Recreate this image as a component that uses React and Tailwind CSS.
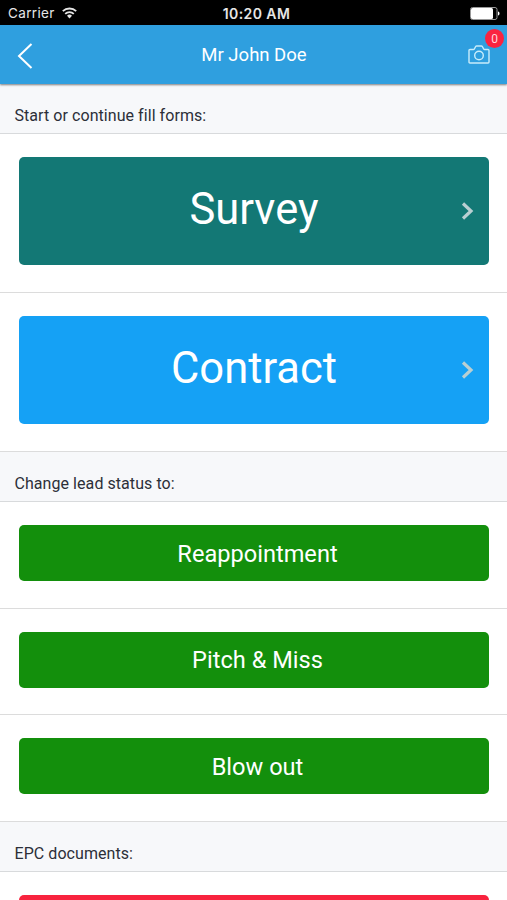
const sections = [
  {
    title: "Start or continue fill forms:",
    items: [
      { label: "Survey", bg: "bg-[#137875]", big: true },
      { label: "Contract", bg: "bg-[#15a1f5]", big: true },
    ],
  },
  {
    title: "Change lead status to:",
    items: [
      { label: "Reappointment", bg: "bg-[#138f0c]" },
      { label: "Pitch & Miss", bg: "bg-[#138f0c]" },
      { label: "Blow out", bg: "bg-[#138f0c]" },
    ],
  },
  {
    title: "EPC documents:",
    items: [{ label: "", bg: "bg-[#f8233e]" }],
  },
];

function StatusBar() {
  return (
    <div className="relative flex h-[25px] items-center justify-between bg-black pt-0.5 pr-[7px] pl-2 font-['Inter',sans-serif] text-[14px] text-[#e6e6e6]">
      <div className="flex items-center gap-[7px]">
        <span className="text-[13.5px] tracking-[0.35px]">Carrier</span>
        <svg className="-mt-0.5" width="15" height="12" viewBox="0 0 15 12" fill="none" stroke="currentColor" strokeWidth="1.8">
          <path d="M.8 4.2a9.6 9.6 0 0 1 13.4 0M3.2 6.9a6.1 6.1 0 0 1 8.6 0" />
          <path d="M5 8.8a3.6 3.6 0 0 1 5 0L7.5 11.6Z" fill="currentColor" stroke="none" />
        </svg>
      </div>
      <span className="absolute inset-x-0 pl-[6px] text-center font-semibold tracking-[0.4px]">10:20 AM</span>
      <svg width="30" height="13" viewBox="0 0 30 13" fill="none">
        <rect x="0.5" y="0.5" width="26.5" height="12" rx="2" stroke="#999" />
        <rect x="1" y="1" width="22" height="11" rx="1.5" fill="white" />
        <path d="M28 4.5c2 .5 2 3.5 0 4Z" fill="white" />
      </svg>
    </div>
  );
}

function Header() {
  return (
    <header className="relative z-10 flex h-[59px] items-center justify-between bg-[#2f9fdf] px-[17px] text-white shadow-[0_1px_2px_rgba(0,0,0,0.5)]">
      <svg className="mt-[3px]" width="16" height="26" viewBox="0 0 16 26" fill="none" stroke="currentColor" strokeWidth="2">
        <path d="M14.5 1 2 13l12.5 12" />
      </svg>
      <h1 className="absolute inset-x-0 pt-0.5 pl-px text-center text-[18.5px]">Mr John Doe</h1>
      <div className="relative">
        <svg width="22" height="19" viewBox="0 0 22 19" fill="none" stroke="#c9edfb" strokeWidth="1.4" strokeLinejoin="round">
          <path d="M2 4.5h3.5C7 4.5 7 1 8.5 1h5C15 1 15 4.5 16.5 4.5H20q1 0 1 1V17q0 1-1 1H2q-1 0-1-1V5.5q0-1 1-1Z" />
          <circle cx="11" cy="10.5" r="4.3" />
        </svg>
        <span className="absolute -top-[16px] -right-[14px] flex size-[19px] items-center justify-center rounded-full bg-[#fa2340] pt-px text-[12px] text-[#ffd5dc]">
          0
        </span>
      </div>
    </header>
  );
}

function ActionButton({ item }) {
  return (
    <button
      className={`relative flex w-full items-center justify-center rounded-[5px] text-white ${item.bg} ${
        item.big ? "h-[108px] pb-[3px] text-[43.5px]" : "h-[56px] pt-[3px] pl-[7px] text-[23.6px]"
      }`}
    >
      {item.label}
      {item.big && (
        <svg className="absolute top-[45px] right-[15px]" width="13" height="18" viewBox="0 0 13 18" fill="none" stroke="#b9cfd2" strokeWidth="3.2">
          <path d="m2 1.5 8 7.5-8 7.5" />
        </svg>
      )}
    </button>
  );
}

export default function App() {
  return (
    <div className="h-[900px] w-full overflow-hidden bg-white font-['Roboto',sans-serif]">
      <StatusBar />
      <Header />
      {sections.map((section) => (
        <section key={section.title}>
          <h2 className="flex h-[50px] items-end border-b border-[#d8dadc] bg-[#f7f8fa] pb-[5px] pl-[14.5px] text-[16px] tracking-[0.06px] text-[#2c2f38]">
            {section.title}
          </h2>
          {section.items.map((item) => (
            <div
              key={item.label}
              className={`border-b border-[#dcdcdc] pt-[23px] pr-[18px] pl-[19px] ${item.big ? "pb-[27px]" : "pb-[26.7px]"}`}
            >
              <ActionButton item={item} />
            </div>
          ))}
        </section>
      ))}
    </div>
  );
}
